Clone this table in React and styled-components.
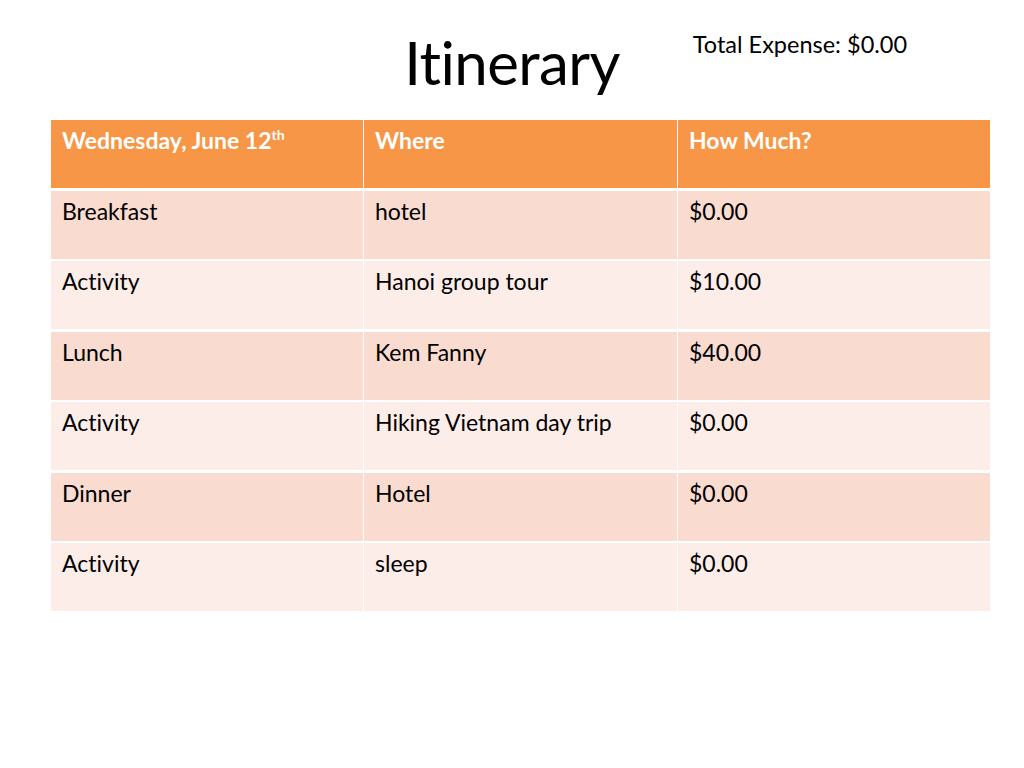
import React from "react";
import styled, { createGlobalStyle } from "styled-components";

const rows = [
  { what: "Breakfast", where: "hotel", cost: "$0.00" },
  { what: "Activity", where: "Hanoi group tour", cost: "$10.00" },
  { what: "Lunch", where: "Kem Fanny", cost: "$40.00" },
  { what: "Activity", where: "Hiking Vietnam day trip", cost: "$0.00" },
  { what: "Dinner", where: "Hotel", cost: "$0.00" },
  { what: "Activity", where: "sleep", cost: "$0.00" },
];

const GlobalStyle = createGlobalStyle`
  html, body {
    margin: 0;
    padding: 0;
    background: #fff;
  }
  body {
    font-family: Lato, "Open Sans", sans-serif;
    font-variant-ligatures: none;
    color: #000;
  }
`;

const Slide = styled.main`
  width: 1024px;
  height: 768px;
  box-sizing: border-box;
  padding: 0 34px 0 51px;
`;

// header spans the whole slide so the title centres on the page
const Header = styled.header`
  display: grid;
  grid-template-columns: 1fr auto 1fr;
  height: 120px;
  margin: 0 -34px 0 -51px;
`;

const Title = styled.h1`
  grid-column: 2;
  margin: 0;
  padding-top: 32px;
  font-size: 60px;
  font-weight: 400;
  line-height: 1;
  letter-spacing: -0.6px;
`;

const Total = styled.div`
  grid-column: 3;
  padding: 33px 0 0 73px;
  font-size: 23.5px;
  line-height: 1;
  white-space: nowrap;
`;

const Table = styled.div`
  display: grid;
  grid-template-columns: 312px 313px 312px;
  grid-auto-rows: 68px;
  column-gap: 1px;
  row-gap: 2.5px;
  width: 939px;
`;

const Cell = styled.div`
  box-sizing: border-box;
  padding: 6px 11px;
  font-size: 23px;
  line-height: 28px;
  font-weight: ${({ $head }) => ($head ? 700 : 400)};
  color: ${({ $head }) => ($head ? "#fff" : "#000")};
  background: ${({ $head, $band }) =>
    $head ? "#f79646" : $band ? "#fdede8" : "#fadbd0"};
`;

const Sup = styled.sup`
  font-size: 14px;
  line-height: 0;
  vertical-align: 9px;
`;

export default function App() {
  return (
    <>
      <GlobalStyle />
      <Slide>
        <Header>
          <Title>Itinerary</Title>
          <Total>Total Expense: $0.00</Total>
        </Header>
        <Table>
          <Cell $head>
            Wednesday, June 12<Sup>th</Sup>
          </Cell>
          <Cell $head>Where</Cell>
          <Cell $head>How Much?</Cell>
          {rows.map((row, i) => (
            <React.Fragment key={i}>
              <Cell $band={i % 2 === 1}>{row.what}</Cell>
              <Cell $band={i % 2 === 1}>{row.where}</Cell>
              <Cell $band={i % 2 === 1}>{row.cost}</Cell>
            </React.Fragment>
          ))}
        </Table>
      </Slide>
    </>
  );
}
